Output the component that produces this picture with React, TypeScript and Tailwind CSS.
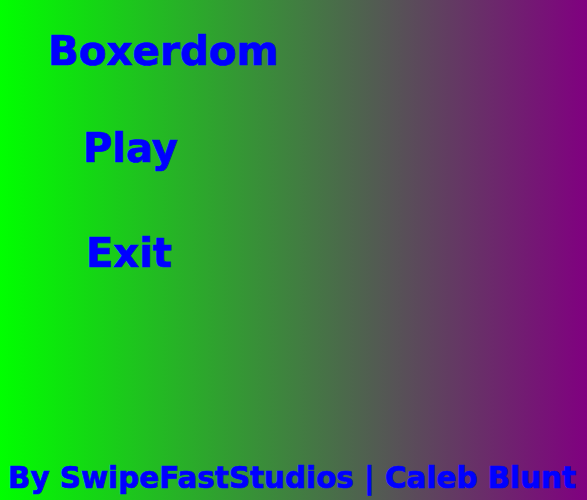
export default function App() {
  return (
    <div
      className="flex h-[500px] w-full flex-col overflow-hidden bg-[linear-gradient(to_right,#00ff00,#800080)] font-bold text-[#0000ff] [-webkit-text-stroke:0.7px_#0000ff]"
      style={{ fontFamily: '"DejaVu Sans", Verdana, sans-serif' }}
    >
      <h1 className="ml-[48px] mt-[31px] text-[40.4px] leading-none">Boxerdom</h1>
      <div className="ml-[83px] mt-[57px] text-[40px] leading-none">Play</div>
      <div className="ml-[86px] mt-[65px] text-[40px] leading-none">Exit</div>
      <footer className="mb-[7px] ml-[8px] mt-auto whitespace-nowrap text-[29.4px] leading-none">
        By SwipeFastStudios | Caleb Blunt
      </footer>
    </div>
  );
}
